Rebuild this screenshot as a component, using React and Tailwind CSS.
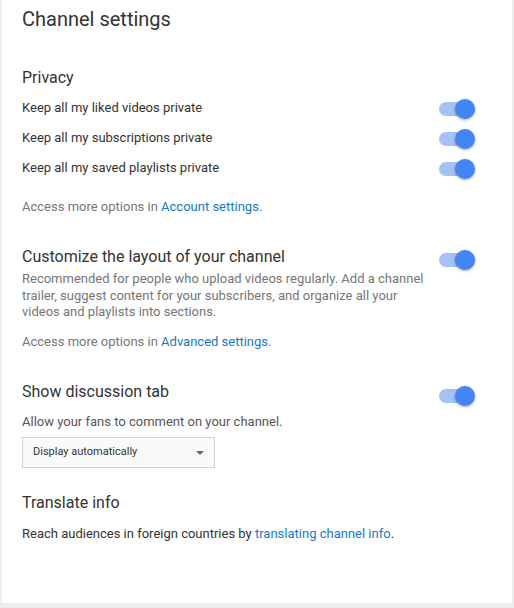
import React from "react";

function Toggle({ className = "" }) {
  return (
    <div className={"relative w-[36px] h-[20px] shrink-0 " + className}>
      <div className="absolute left-0 top-[3px] w-[32px] h-[14px] rounded-full bg-[#a4c2f6]" />
      <div className="absolute right-0 top-0 w-[20px] h-[20px] rounded-full bg-[#4285f4] shadow-[0_1px_3px_rgba(0,0,0,0.35)]" />
    </div>
  );
}

export default function App() {
  return (
    <div
      className="w-[514px] h-[608px] bg-[#eeeeee] overflow-hidden"
      style={{ fontFamily: "Roboto, 'Liberation Sans', Arial, sans-serif" }}
    >
      <div className="ml-[2px] w-[510px] h-[603px] bg-white pl-[20px] pr-[37px] pt-[7px] text-[#333333]">
        <h1 className="text-[20px] leading-[24px] text-[#333]">Channel settings</h1>

        <h2 className="mt-[37px] text-[16px] leading-[20px] text-[#333]">Privacy</h2>
        <div className="mt-[5px]">
          {[
            "Keep all my liked videos private",
            "Keep all my subscriptions private",
            "Keep all my saved playlists private",
          ].map((t) => (
            <div key={t} className="h-[30px] flex items-center justify-between text-[13px]">
              <span className="text-[#333]">{t}</span>
              <Toggle className="mt-[2px]" />
            </div>
          ))}
        </div>
        <p className="mt-[15px] text-[13px] leading-[18px] text-[#767676]">
          Access more options in <span className="text-[#167ac6]">Account settings</span>.
        </p>

        <div className="mt-[31px] flex justify-between items-start">
          <h2 className="text-[16px] leading-[20px] text-[#333]">Customize the layout of your channel</h2>
          <Toggle className="mt-[3px]" />
        </div>
        <p className="mt-[1px] w-[410px] text-[13px] leading-[16.5px] text-[#767676]">
          Recommended for people who upload videos regularly. Add a channel trailer, suggest content for your subscribers, and organize all your videos and playlists into sections.
        </p>
        <p className="mt-[12.5px] text-[13px] leading-[18px] text-[#767676]">
          Access more options in <span className="text-[#167ac6]">Advanced settings</span>.
        </p>

        <div className="mt-[31px] flex justify-between items-start">
          <h2 className="text-[16px] leading-[20px] text-[#333]">Show discussion tab</h2>
          <Toggle className="mt-[4px]" />
        </div>
        <p className="mt-[7px] text-[13px] leading-[18px] text-[#555]">
          Allow your fans to comment on your channel.
        </p>
        <div className="mt-[6px] w-[193px] h-[31px] border border-[#d3d3d3] bg-[#fafafa] flex items-center justify-between pl-[10px] pr-[10px] text-[11px] text-[#333]">
          <span>Display automatically</span>
          <svg width="8" height="4" viewBox="0 0 8 4" className="mt-[1px]">
            <path d="M0 0 L8 0 L4 4 Z" fill="#666" />
          </svg>
        </div>

        <h2 className="mt-[25px] text-[16px] leading-[20px] text-[#333]">Translate info</h2>
        <p className="mt-[12px] text-[13px] leading-[18px] text-[#333]">
          Reach audiences in foreign countries by <span className="text-[#167ac6]">translating channel info</span>.
        </p>
      </div>
    </div>
  );
}
